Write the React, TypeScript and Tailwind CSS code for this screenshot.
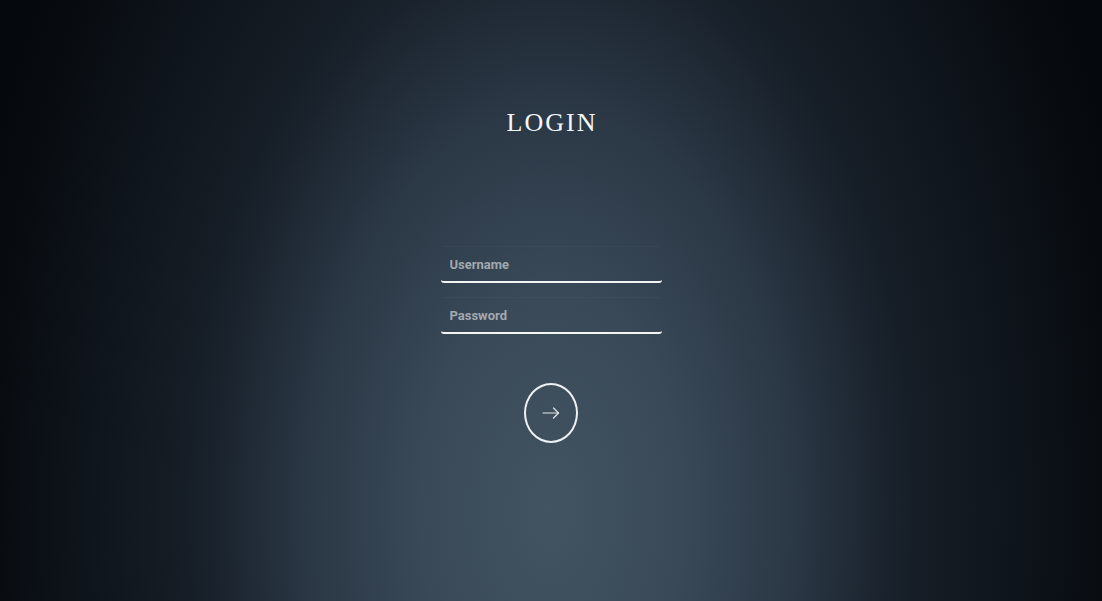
import { useState } from "react";

function ArrowIcon() {
    return (
        <svg width="18" height="12" viewBox="0 0 18 12" fill="none" stroke="#e3e7ea" strokeWidth="1.2" strokeLinecap="round" strokeLinejoin="round">
            <path d="M1 6h15.5" />
            <path d="M11.5 1l5 5-5 5" />
        </svg>
    );
}

export default function App() {
    const [username, setUsername] = useState("");
    const [password, setPassword] = useState("");

    return (
        <div className="w-full h-[601px] flex flex-col items-center bg-[radial-gradient(ellipse_600px_1000px_at_50%_85%,#425361_0%,#394958_22%,#2b3846_40%,#161e27_60%,#05080c_100%)]">
            {/* Title */}
            <h1 className="mt-[104px] pl-[2px] text-[26px] leading-[38px] tracking-[2px] text-[#f4f6f8] font-['Liberation_Serif',serif]">
                LOGIN
            </h1>

            {/* Form */}
            <form className="mt-[104px] flex flex-col gap-[14px]" onSubmit={(e) => e.preventDefault()}>
                <input
                    type="text"
                    value={username}
                    onChange={(e) => setUsername(e.target.value)}
                    placeholder="Username"
                    className="w-[221px] h-[37px] px-[9px] pt-[1px] bg-transparent rounded-[3px] border-t border-t-white/[0.03] border-b-2 border-b-[#f2f4f5] outline-none text-[13px] font-bold text-[#dfe3e6] placeholder:text-[#a2a9af] font-['Roboto',sans-serif]"
                />
                <input
                    type="password"
                    value={password}
                    onChange={(e) => setPassword(e.target.value)}
                    placeholder="Password"
                    className="w-[221px] h-[37px] px-[9px] pt-[1px] bg-transparent rounded-[3px] border-t border-t-white/[0.03] border-b-2 border-b-[#f2f4f5] outline-none text-[13px] font-bold text-[#dfe3e6] placeholder:text-[#a2a9af] font-['Roboto',sans-serif]"
                />

                <button
                    type="submit"
                    className="mt-[35px] self-center w-[54px] h-[60px] rounded-[50%] border-2 border-[#eef1f3] flex items-center justify-center"
                >
                    <ArrowIcon />
                </button>
            </form>
        </div>
    );
}
